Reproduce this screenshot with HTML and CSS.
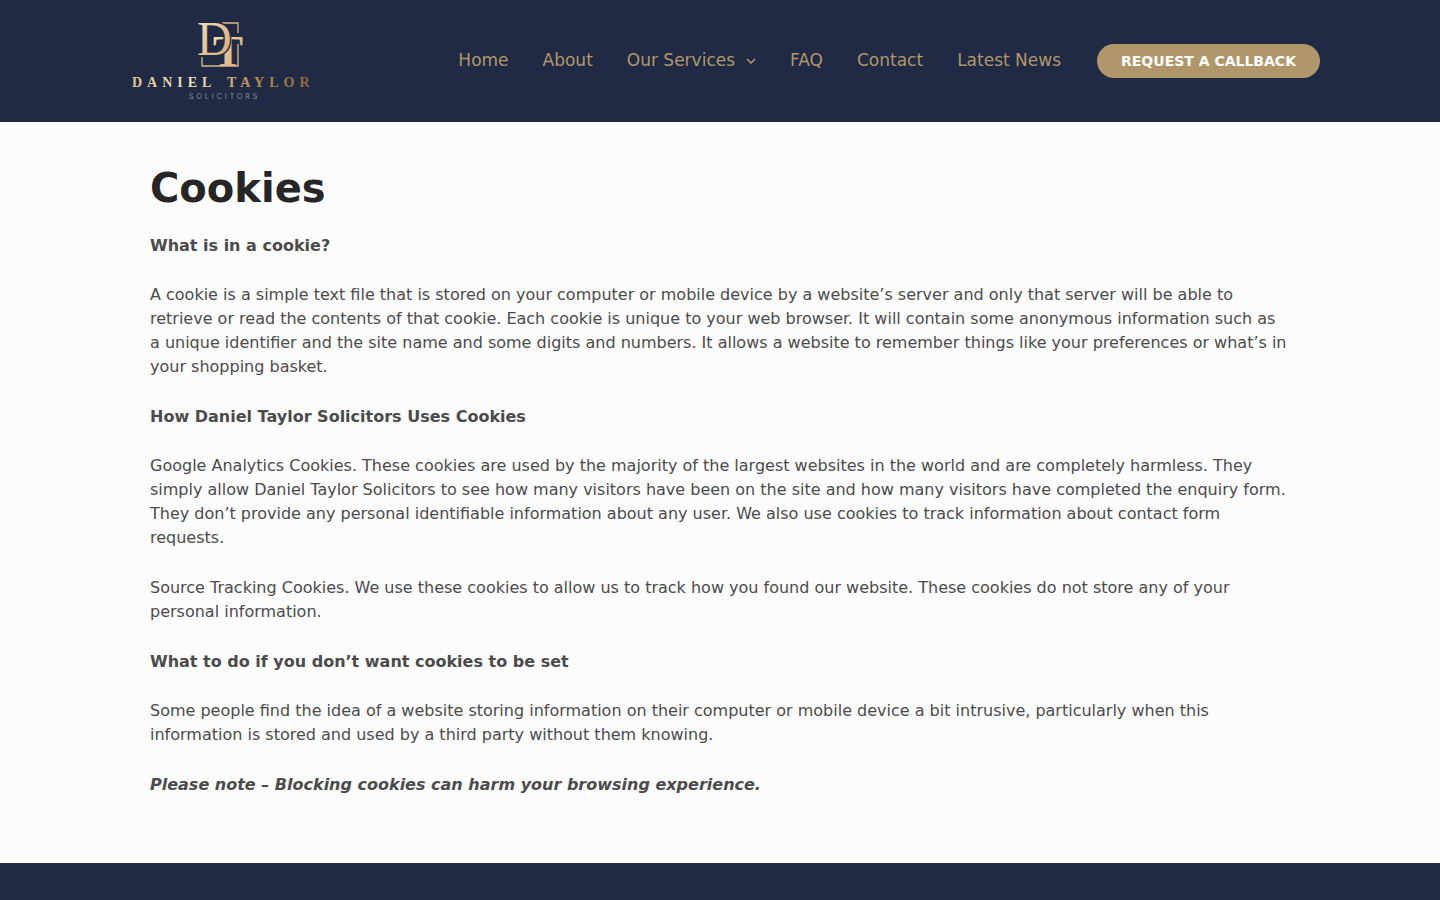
FILE: index.html
```html
<!DOCTYPE html>
<html lang="en">
<head>
    <meta charset="UTF-8">
    <meta name="viewport" content="width=device-width, initial-scale=1.0">
    <title>Cookies</title>
    <link rel="stylesheet" href="styles.css">
</head>
<body>
    <header class="site-header">
        <div class="header-inner">
            <a class="logo" href="#" aria-label="Daniel Taylor Solicitors">
                <svg width="204" height="90" viewBox="0 0 204 90">
                    <defs>
                        <linearGradient id="gold" gradientUnits="userSpaceOnUse" x1="12" y1="0" x2="192" y2="0">
                            <stop offset="0" stop-color="#e0c78f"/>
                            <stop offset="0.35" stop-color="#f0e2ba"/>
                            <stop offset="0.65" stop-color="#bd9353"/>
                            <stop offset="1" stop-color="#8a6436"/>
                        </linearGradient>
                        <linearGradient id="mark" x1="0" y1="0" x2="1" y2="1">
                            <stop offset="0" stop-color="#f6e3c0"/>
                            <stop offset="1" stop-color="#d3a56a"/>
                        </linearGradient>
                    </defs>
                    <!-- square frame behind the monogram -->
                    <path class="logo-frame" d="M102 7H118V17M118 28V50H82V41"/>
                    <text class="logo-mark logo-back" x="93" y="50">T</text>
                    <text class="logo-mark logo-front" x="77" y="39">D</text>
                    <text class="logo-name" x="12" y="71">DANIEL</text>
                    <text class="logo-name" x="107" y="71">TAYLOR</text>
                    <text class="logo-sub" x="69" y="83">SOLICITORS</text>
                </svg>
            </a>
            <nav class="main-nav">
                <a href="#">Home</a>
                <a href="#">About</a>
                <a href="#">Our Services
                    <svg class="arrow" width="10" height="6" viewBox="0 0 10 6"><path d="M1 1l4 4 4-4"/></svg>
                </a>
                <a href="#">FAQ</a>
                <a href="#">Contact</a>
                <a href="#">Latest News</a>
            </nav>
            <button class="callback-button" type="button">REQUEST A CALLBACK</button>
        </div>
    </header>

    <main class="content">
        <h1>Cookies</h1>
        <p class="lead">What is in a cookie?</p>
        <p>A cookie is a simple text file that is stored on your computer or mobile device by a website’s server and only that server will be able to retrieve or read the contents of that cookie. Each cookie is unique to your web browser. It will contain some anonymous information such as a unique identifier and the site name and some digits and numbers. It allows a website to remember things like your preferences or what’s in your shopping basket.</p>
        <p class="lead">How Daniel Taylor Solicitors Uses Cookies</p>
        <p>Google Analytics Cookies. These cookies are used by the majority of the largest websites in the world and are completely harmless. They simply allow Daniel Taylor Solicitors to see how many visitors have been on the site and how many visitors have completed the enquiry form. They don’t provide any personal identifiable information about any user. We also use cookies to track information about contact form requests.</p>
        <p>Source Tracking Cookies. We use these cookies to allow us to track how you found our website. These cookies do not store any of your personal information.</p>
        <p class="lead">What to do if you don’t want cookies to be set</p>
        <p>Some people find the idea of a website storing information on their computer or mobile device a bit intrusive, particularly when this information is stored and used by a third party without them knowing.</p>
        <p class="note">Please note – Blocking cookies can harm your browsing experience.</p>
    </main>

    <footer class="site-footer"></footer>
</body>
</html>
```
FILE: styles.css
```css
* {
    box-sizing: border-box;
}
body {
    font-family: "DejaVu Sans", sans-serif;
    font-size: 16px;
    line-height: 24px;
    color: #4b4b4b;
    background-color: #fcfcfc;
    margin: 0;
    min-height: 100vh;
    display: flex;
    flex-direction: column;
}
.site-header {
    background-color: #202a44;
    padding: 16px 0;
}
.header-inner {
    display: flex;
    align-items: center;
    max-width: 1240px;
    margin: 0 auto;
    padding: 0 20px;
}
.logo {
    margin-right: auto;
}
.logo svg {
    display: block;
    overflow: visible;
}
.logo-frame {
    fill: none;
    stroke: #dcb983;
    stroke-width: 1.3;
}
.logo-mark {
    font-family: "Liberation Serif", serif;
    fill: url(#mark);
}
.logo-back {
    font-size: 45px;
    font-weight: bold;
}
.logo-front {
    font-size: 48px;
    stroke: #202a44;
    stroke-width: 3;
    paint-order: stroke;
}
.logo-name {
    font-family: "Liberation Serif", serif;
    font-size: 14px;
    font-weight: bold;
    letter-spacing: 5px;
    fill: url(#gold);
}
.logo-sub {
    font-family: Inter, sans-serif;
    font-size: 7px;
    letter-spacing: 3px;
    fill: #8b92a0;
}
.main-nav {
    display: flex;
    padding-bottom: 2px;
}
.main-nav a {
    display: flex;
    align-items: center;
    gap: 11px;
    padding: 0 17px;
    font-size: 17px;
    color: #b0976a;
    text-decoration: none;
    white-space: nowrap;
}
.arrow {
    margin-top: 2px;
}
.arrow path {
    fill: none;
    stroke: #b0976a;
    stroke-width: 1.5;
}
.callback-button {
    margin-left: 19px;
    padding: 9px 24px;
    font-family: inherit;
    font-size: 14px;
    font-weight: bold;
    line-height: 16px;
    color: #ffffff;
    background-color: #b0976a;
    border: none;
    border-radius: 30px;
    cursor: pointer;
    white-space: nowrap;
}
.content {
    width: 100%;
    max-width: 1180px;
    margin: 0 auto;
    padding: 42px 20px 40px;
}
h1 {
    margin: 0 0 22px;
    font-size: 40px;
    line-height: 48px;
    color: #262626;
}
p {
    margin: 0 0 26px;
}
.lead {
    font-weight: bold;
    margin-bottom: 25px;
}
.note {
    font-weight: bold;
    font-style: italic;
}
.site-footer {
    flex: 1;
    background-color: #202a44;
}
```
